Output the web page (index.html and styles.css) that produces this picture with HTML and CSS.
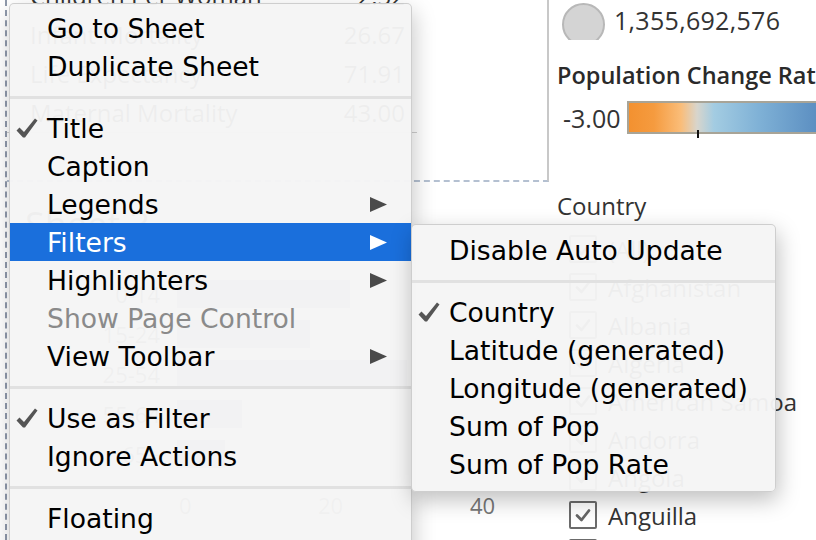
FILE: index.html
```html
<!DOCTYPE html>
<html>
<head>
<meta charset="utf-8">
<link rel="stylesheet" href="styles.css">
</head>
<body>
<div class="page">
  <div class="left">
    <div class="pane">
      <div class="table">
        <div class="trow"><span>Children Per Woman</span><span>2.52</span></div>
        <div class="trow"><span>Infant Mortality</span><span>26.67</span></div>
        <div class="trow"><span>Life Expectancy</span><span>71.91</span></div>
        <div class="trow"><span>Maternal Mortality</span><span>43.00</span></div>
      </div>
      <div class="rule"></div>
    </div>
    <div class="sheet">
      <div class="sheet-title">Sheet 3</div>
      <div class="bars">
        <div class="brow"><span class="blabel">0-14</span><span class="bar" style="width:173px"></span></div>
        <div class="brow"><span class="blabel">15-24</span><span class="bar" style="width:133px"></span></div>
        <div class="brow"><span class="blabel">25-54</span><span class="bar" style="width:230px"></span></div>
        <div class="brow"><span class="blabel">55-64</span><span class="bar" style="width:65px"></span></div>
        <div class="brow"><span class="blabel">65+</span><span class="bar" style="width:48px"></span></div>
      </div>
      <div class="axis"><span class="t0">0</span><span class="t20">20</span><span>40</span></div>
    </div>
  </div>
  <div class="right">
    <div class="size-row">
      <span class="circle"></span>
      <span class="size-val">1,355,692,576</span>
    </div>
    <div class="legend-title">Population Change Rate</div>
    <div class="color-row">
      <span class="color-min">-3.00</span>
      <span class="ramp"><span class="ramp-tick"></span></span>
    </div>
    <div class="filter-title">Country</div>
    <div class="cb-list">
      <div class="cb-row"><span class="cb"><svg viewBox="0 0 24 24" width="24" height="24"><polyline points="6,12.5 10.5,17 18,7.5"/></svg></span>(All)</div>
      <div class="cb-row"><span class="cb"><svg viewBox="0 0 24 24" width="24" height="24"><polyline points="6,12.5 10.5,17 18,7.5"/></svg></span>Afghanistan</div>
      <div class="cb-row"><span class="cb"><svg viewBox="0 0 24 24" width="24" height="24"><polyline points="6,12.5 10.5,17 18,7.5"/></svg></span>Albania</div>
      <div class="cb-row"><span class="cb"><svg viewBox="0 0 24 24" width="24" height="24"><polyline points="6,12.5 10.5,17 18,7.5"/></svg></span>Algeria</div>
      <div class="cb-row"><span class="cb"><svg viewBox="0 0 24 24" width="24" height="24"><polyline points="6,12.5 10.5,17 18,7.5"/></svg></span>American Samoa</div>
      <div class="cb-row"><span class="cb"><svg viewBox="0 0 24 24" width="24" height="24"><polyline points="6,12.5 10.5,17 18,7.5"/></svg></span>Andorra</div>
      <div class="cb-row"><span class="cb"><svg viewBox="0 0 24 24" width="24" height="24"><polyline points="6,12.5 10.5,17 18,7.5"/></svg></span>Angola</div>
      <div class="cb-row"><span class="cb"><svg viewBox="0 0 24 24" width="24" height="24"><polyline points="6,12.5 10.5,17 18,7.5"/></svg></span>Anguilla</div>
      <div class="cb-row"><span class="cb"><svg viewBox="0 0 24 24" width="24" height="24"><polyline points="6,12.5 10.5,17 18,7.5"/></svg></span>Antarctica</div>
    </div>
  </div>
</div>

<div class="menu main-menu">
  <div class="item"><span class="check"></span><span class="label">Go to Sheet</span></div>
  <div class="item"><span class="check"></span><span class="label">Duplicate Sheet</span></div>
  <div class="sep"></div>
  <div class="item"><span class="check"><svg viewBox="0 0 22 20" width="22" height="20"><path d="M0.5,12.5 L3.5,9.5 L8,14 L19,0.5 L21.5,2.5 L9,19.5 L7,19.5 Z"/></svg></span><span class="label">Title</span></div>
  <div class="item"><span class="check"></span><span class="label">Caption</span></div>
  <div class="item"><span class="check"></span><span class="label">Legends</span><svg class="arrow" viewBox="0 0 17 15" width="17" height="15"><path d="M0,0 L17,7.5 L0,15 Z"/></svg></div>
  <div class="item active"><span class="check"></span><span class="label">Filters</span><svg class="arrow" viewBox="0 0 17 15" width="17" height="15"><path d="M0,0 L17,7.5 L0,15 Z"/></svg></div>
  <div class="item"><span class="check"></span><span class="label">Highlighters</span><svg class="arrow" viewBox="0 0 17 15" width="17" height="15"><path d="M0,0 L17,7.5 L0,15 Z"/></svg></div>
  <div class="item disabled"><span class="check"></span><span class="label">Show Page Control</span></div>
  <div class="item"><span class="check"></span><span class="label">View Toolbar</span><svg class="arrow" viewBox="0 0 17 15" width="17" height="15"><path d="M0,0 L17,7.5 L0,15 Z"/></svg></div>
  <div class="sep"></div>
  <div class="item"><span class="check"><svg viewBox="0 0 22 20" width="22" height="20"><path d="M0.5,12.5 L3.5,9.5 L8,14 L19,0.5 L21.5,2.5 L9,19.5 L7,19.5 Z"/></svg></span><span class="label">Use as Filter</span></div>
  <div class="item"><span class="check"></span><span class="label">Ignore Actions</span></div>
  <div class="sep"></div>
  <div class="item"><span class="check"></span><span class="label">Floating</span></div>
</div>

<div class="menu sub-menu">
  <div class="item"><span class="check"></span><span class="label">Disable Auto Update</span></div>
  <div class="sep"></div>
  <div class="item"><span class="check"><svg viewBox="0 0 22 20" width="22" height="20"><path d="M0.5,12.5 L3.5,9.5 L8,14 L19,0.5 L21.5,2.5 L9,19.5 L7,19.5 Z"/></svg></span><span class="label">Country</span></div>
  <div class="item"><span class="check"></span><span class="label">Latitude (generated)</span></div>
  <div class="item"><span class="check"></span><span class="label">Longitude (generated)</span></div>
  <div class="item"><span class="check"></span><span class="label">Sum of Pop</span></div>
  <div class="item"><span class="check"></span><span class="label">Sum of Pop Rate</span></div>
</div>
</body>
</html>
```

FILE: styles.css
```css
* { box-sizing: border-box; }
html, body {
  margin: 0;
  padding: 0;
}
body {
  width: 816px;
  height: 540px;
  overflow: hidden;
  background: #ffffff;
  font-family: "Open Sans", "Noto Sans", sans-serif;
  color: #333;
  position: relative;
}
.page {
  display: flex;
  height: 540px;
  overflow: hidden;
}

/* left side: worksheet */
.left {
  width: 544px;
  margin-left: 5px;
  border-left: 2px dashed #8f99ab;
  flex: none;
  display: flex;
  flex-direction: column;
}
.left > * { flex-shrink: 0; }
.pane {
  height: 182px;
  border-right: 2px solid #c8c8c8;
  border-bottom: 2px dashed #b4c0d1;
  overflow: hidden;
}
.table {
  margin-top: -24px;
  width: 398px;
  padding-left: 23px;
}
.trow {
  display: flex;
  justify-content: space-between;
  height: 39px;
  line-height: 39px;
  font-size: 24px;
  color: #333;
}
.rule {
  width: 410px;
  height: 1px;
  background: #cfcfcf;
}
.sheet-title {
  margin-top: 21px;
  padding-left: 18px;
  font-size: 36px;
  line-height: 44px;
  color: #444;
}
.bars {
  margin-top: 27px;
}
.brow {
  display: flex;
  align-items: center;
  height: 40px;
}
.blabel {
  width: 153px;
  text-align: right;
  font-size: 22px;
  color: #666;
}
.bar {
  margin-left: 17px;
  height: 28px;
  background: #9fb3cc;
}
.axis {
  margin-top: 16px;
  padding-left: 172px;
  display: flex;
  font-size: 22px;
  line-height: 30px;
  color: #777;
}
.axis .t0 { width: 139px; }
.axis .t20 { width: 152px; }

/* right side: legends */
.right {
  margin-left: 8px;
  flex: 1;
  display: flex;
  flex-direction: column;
}
.right > * { flex-shrink: 0; }
.size-row {
  display: flex;
  align-items: flex-start;
  height: 40px;
  padding-top: 3px;
  overflow: hidden;
}
.circle {
  width: 43px;
  height: 43px;
  margin-left: 5px;
  border-radius: 50%;
  background: #d4d4d4;
  border: 2.5px solid #b8b8b8;
  flex: none;
}
.size-val {
  margin-left: 9px;
  font-size: 25px;
  letter-spacing: 0.3px;
  line-height: 40px;
  margin-top: -3px;
  color: #333;
}
.legend-title {
  margin-top: 20px;
  font-size: 23.5px;
  font-weight: 600;
  line-height: 30px;
  color: #2a2a2a;
  white-space: nowrap;
}
.color-row {
  margin-top: 11px;
  display: flex;
  align-items: center;
  height: 33px;
}
.color-min {
  margin-left: 6px;
  font-size: 25px;
  color: #333;
  width: 64px;
}
.ramp {
  position: relative;
  flex: none;
  width: 260px;
  height: 33px;
  border: 2px solid #a8a497;
  background: linear-gradient(to right,
    #f39130 0px, #f59b3f 25px, #fabd79 52px, #d8d5cc 68px,
    #a3cce2 85px, #7fb1d6 130px, #5b8ec1 189px, #4f80b5 260px);
}
.ramp-tick {
  position: absolute;
  left: 68px;
  top: 27px;
  width: 2px;
  height: 8px;
  background: #111;
}
.filter-title {
  margin-top: 57px;
  font-size: 24px;
  line-height: 30px;
  color: #333;
}
.cb-list {
  margin-top: 9px;
}
.cb-row {
  display: flex;
  align-items: center;
  height: 38px;
  font-size: 24px;
  color: #333;
  white-space: nowrap;
}
.cb {
  width: 28px;
  height: 28px;
  margin-left: 12px;
  margin-right: 11px;
  border: 2px solid #6b6b6b;
  border-radius: 2px;
  background: #fff;
  display: flex;
  align-items: center;
  justify-content: center;
  flex: none;
}
.cb svg polyline {
  fill: none;
  stroke: #666;
  stroke-width: 2.8;
  stroke-linecap: round;
  stroke-linejoin: round;
}

/* menus */
.menu {
  position: absolute;
  background: rgba(245, 245, 245, 0.965);
  border: 1px solid rgba(0, 0, 0, 0.16);
  border-radius: 5px;
  font-family: "DejaVu Sans", "Liberation Sans", sans-serif;
  font-size: 26.6px;
  color: #000;
}
.main-menu {
  left: 9px;
  top: 3px;
  width: 403px;
  height: 570px;
  padding-top: 5px;
  box-shadow: 2px 8px 22px rgba(0, 0, 0, 0.22);
}
.sub-menu {
  left: 411px;
  top: 224px;
  width: 365px;
  height: 268px;
  padding-top: 6px;
  box-shadow: 2px 8px 22px rgba(0, 0, 0, 0.25);
}
.item {
  display: flex;
  align-items: center;
  height: 38px;
  padding-right: 24px;
  white-space: nowrap;
}
.check {
  width: 37px;
  padding-left: 6px;
  display: flex;
  align-items: center;
  flex: none;
}
.check svg path {
  fill: #555;
}
.label {
  flex: 1;
}
.arrow path {
  fill: #4a4a4a;
}
.item.active {
  background: #1a6fdc;
  color: #fff;
}
.item.active .arrow path {
  fill: #fff;
}
.item.disabled {
  color: #8a8a8a;
}
.sep {
  height: 3px;
  margin: 11px 0 10px;
  background: #e1e1e1;
}
```
